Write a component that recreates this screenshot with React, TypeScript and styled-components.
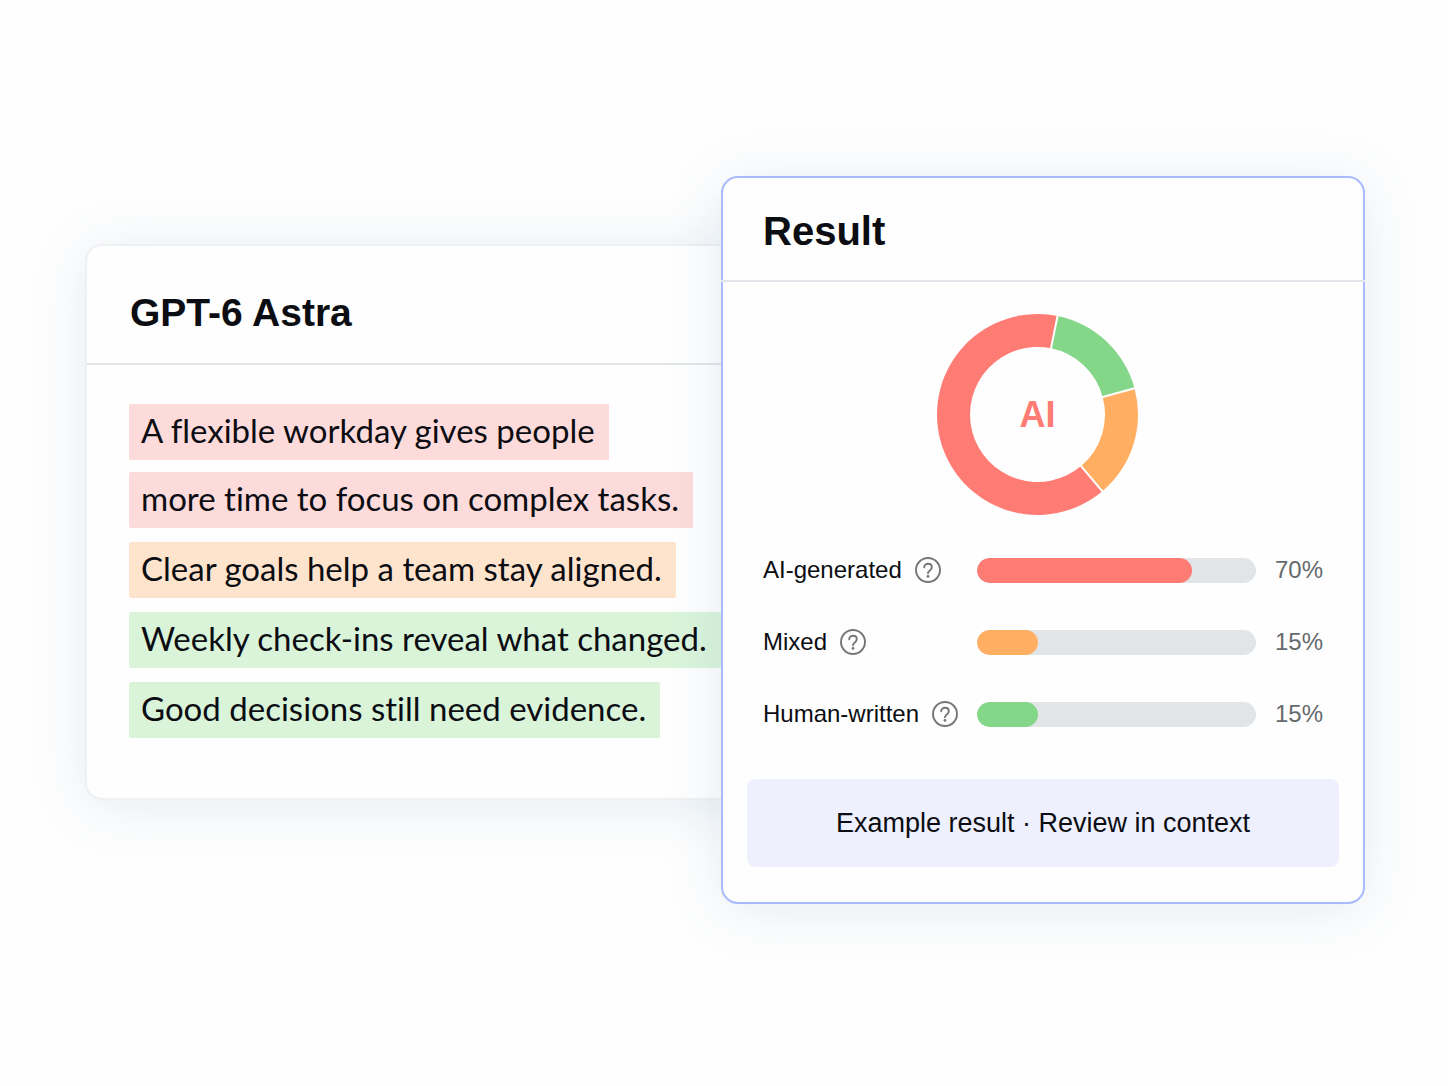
import React from "react";
import styled, { createGlobalStyle } from "styled-components";

const GlobalStyle = createGlobalStyle`
  *, *::before, *::after { box-sizing: border-box; }
  body {
    margin: 0;
    background: #fefefe;
    color: #0b0d12;
    font-family: "Liberation Sans", Arial, sans-serif;
  }
  h2, p { margin: 0; }
`;

const palette = {
  ai: "#ff7c74",
  mixed: "#ffae62",
  human: "#84d688",
};

const tints = {
  ai: "#fddbda",
  mixed: "#ffe4cd",
  human: "#daf4da",
};

type Kind = keyof typeof palette;

const Stage = styled.main`
  display: grid;
  grid-template-columns: minmax(0, 636fr) minmax(0, 644fr);
  align-items: center;
  min-height: 100vh;
  padding: 40px 83px 46px 85px;
`;

const Card = styled.section`
  border-radius: 17px;
  background: #fefefe;
  box-shadow: 0 6px 56px rgba(84, 134, 176, 0.15);
`;

const DocumentCard = styled(Card)`
  border: 2px solid #eef0f2;
  margin: 0 -40px 37px 0;
  padding-bottom: 60px;
`;

const ResultCard = styled(Card)`
  z-index: 1;
  border: 2px solid #a9baff;
  padding-bottom: 35px;
`;

const CardHeader = styled.header`
  display: flex;
  align-items: center;
  height: 119px;
  padding: 18px 43px 0;
  border-bottom: 2px solid #e2e5e9;
`;

/* The rule under this header runs across the card's own border. */
const ResultHeader = styled(CardHeader)`
  height: 104px;
  margin: 0 -2px;
  padding: 4px 42px 0;
`;

const Title = styled.h2<{ $size: number }>`
  font-size: ${(p) => p.$size}px;
  line-height: 48px;
  font-weight: 700;
`;

const Passages = styled.div`
  display: grid;
  gap: 14px;
  padding: 39px 42px 0;
`;

const Sentence = styled.p`
  display: grid;
  gap: 12px;
`;

const Highlight = styled.mark<{ $kind: Kind }>`
  width: fit-content;
  padding: 0 14px 4px 12px;
  border-radius: 2px;
  background: ${(p) => tints[p.$kind]};
  color: inherit;
  font-family: Lato, "Noto Sans", sans-serif;
  font-size: 33px;
  font-variant-ligatures: none;
  line-height: 52px;
  white-space: nowrap;
`;

const Chart = styled.figure`
  display: flex;
  justify-content: center;
  margin: 0;
  padding: 32px 0 0;
`;

const Breakdown = styled.ul`
  display: grid;
  gap: 44px;
  margin: 0;
  padding: 40px 40px 0;
  list-style: none;
`;

const Row = styled.li`
  display: grid;
  grid-template-columns: 214px minmax(0, 1fr) 67px;
  align-items: center;
  height: 28px;
  font-size: 24px;
  line-height: 28px;
`;

const Label = styled.div`
  display: flex;
  align-items: center;
  gap: 13px;
  white-space: nowrap;
`;

const HelpButton = styled.button`
  display: flex;
  padding: 0;
  border: 0;
  background: none;
  color: #74777a;
  cursor: pointer;
`;

const Track = styled.div`
  height: 25px;
  border-radius: 13px;
  background: #e1e5e8;
  overflow: hidden;
`;

const Fill = styled.div<{ $kind: Kind }>`
  height: 100%;
  border-radius: 13px;
  background: ${(p) => palette[p.$kind]};
`;

const Value = styled.span`
  color: #66696c;
  text-align: right;
`;

const Notice = styled.p`
  margin: 51px 24px 0;
  border-radius: 8px;
  background: #eef0fe;
  font-size: 27px;
  line-height: 88px;
  text-align: center;
`;

const passages: { kind: Kind; lines: string[] }[] = [
  { kind: "ai", lines: ["A flexible workday gives people", "more time to focus on complex tasks."] },
  { kind: "mixed", lines: ["Clear goals help a team stay aligned."] },
  { kind: "human", lines: ["Weekly check-ins reveal what changed."] },
  { kind: "human", lines: ["Good decisions still need evidence."] },
];

const scores: { kind: Kind; label: string; value: number; fill: number }[] = [
  { kind: "ai", label: "AI-generated", value: 70, fill: 77 },
  { kind: "mixed", label: "Mixed", value: 15, fill: 22 },
  { kind: "human", label: "Human-written", value: 15, fill: 22 },
];

// Angles are clockwise degrees from twelve o'clock.
const slices: { kind: Kind; from: number; to: number }[] = [
  { kind: "human", from: 11.5, to: 74.9 },
  { kind: "mixed", from: 74.9, to: 139.8 },
  { kind: "ai", from: 139.8, to: 371.5 },
];

const CENTER = 100.5;
const OUTER = 100.5;
const INNER = 67.5;

function point(radius: number, degrees: number) {
  const a = (degrees * Math.PI) / 180;
  return `${CENTER + radius * Math.sin(a)} ${CENTER - radius * Math.cos(a)}`;
}

function slicePath(from: number, to: number) {
  const large = to - from > 180 ? 1 : 0;
  return [
    `M${point(OUTER, from)}`,
    `A${OUTER} ${OUTER} 0 ${large} 1 ${point(OUTER, to)}`,
    `L${point(INNER, to)}`,
    `A${INNER} ${INNER} 0 ${large} 0 ${point(INNER, from)}Z`,
  ].join("");
}

function Donut() {
  return (
    <svg width="212" height="202" viewBox="0 0 212 202" role="img" aria-label="AI">
      {slices.map((s) => (
        <path key={s.kind} d={slicePath(s.from, s.to)} fill={palette[s.kind]} />
      ))}
      {slices.map((s) => (
        <path
          key={s.kind}
          d={`M${point(INNER - 1, s.from)}L${point(OUTER + 1, s.from)}`}
          stroke="#fefefe"
          strokeWidth="2"
        />
      ))}
      <text
        x={CENTER}
        y="113"
        textAnchor="middle"
        fontFamily="Liberation Sans, Arial, sans-serif"
        fontSize="36"
        fontWeight="700"
        fill={palette.ai}
      >
        AI
      </text>
    </svg>
  );
}

function HelpIcon() {
  return (
    <svg width="26" height="26" viewBox="0 0 26 26" fill="none" stroke="currentColor" aria-hidden="true">
      <circle cx="13" cy="13" r="12" strokeWidth="1.9" />
      <path
        d="M9.2 10.3C9.2 8.1 10.9 6.8 13 6.8s3.8 1.3 3.8 3.4c0 1.5-.9 2.3-2 3.2-1.2.9-1.8 1.5-1.8 2.9"
        strokeWidth="1.9"
        strokeLinecap="round"
      />
      <circle cx="13" cy="19.4" r="1.4" fill="currentColor" stroke="none" />
    </svg>
  );
}

export default function App() {
  return (
    <>
      <GlobalStyle />
      <Stage>
        <DocumentCard>
          <CardHeader>
            <Title $size={39}>GPT-6 Astra</Title>
          </CardHeader>
          <Passages>
            {passages.map((p) => (
              <Sentence key={p.lines[0]}>
                {p.lines.map((line) => (
                  <Highlight key={line} $kind={p.kind}>
                    {line}
                  </Highlight>
                ))}
              </Sentence>
            ))}
          </Passages>
        </DocumentCard>
        <ResultCard>
          <ResultHeader>
            <Title $size={40}>Result</Title>
          </ResultHeader>
          <Chart>
            <Donut />
          </Chart>
          <Breakdown>
            {scores.map((s) => (
              <Row key={s.kind}>
                <Label>
                  {s.label}
                  <HelpButton type="button" aria-label={`About ${s.label}`}>
                    <HelpIcon />
                  </HelpButton>
                </Label>
                <Track
                  role="meter"
                  aria-label={s.label}
                  aria-valuemin={0}
                  aria-valuemax={100}
                  aria-valuenow={s.value}
                >
                  <Fill $kind={s.kind} style={{ width: `${s.fill}%` }} />
                </Track>
                <Value>{s.value}%</Value>
              </Row>
            ))}
          </Breakdown>
          <Notice>Example result · Review in context</Notice>
        </ResultCard>
      </Stage>
    </>
  );
}
